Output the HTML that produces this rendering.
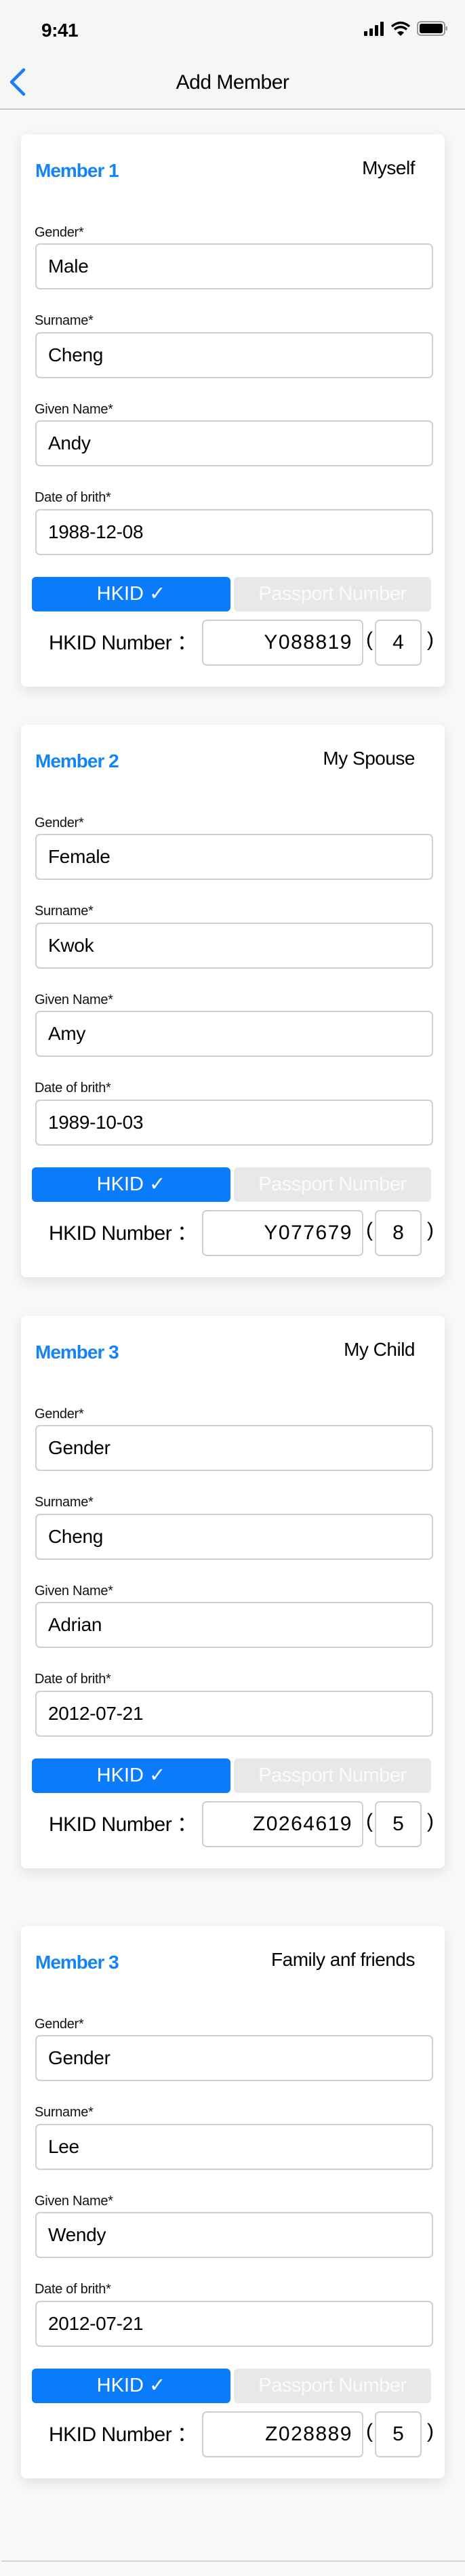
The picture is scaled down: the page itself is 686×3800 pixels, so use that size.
<!DOCTYPE html>
<html><head><meta charset="utf-8"><style>
*{margin:0;padding:0;box-sizing:border-box}
body{width:686px;height:3800px;background:#f8f8f8;font-family:"Liberation Sans",Arial,sans-serif;position:relative;overflow:hidden;color:#000}
.abs{position:absolute}
.card{position:absolute;left:31px;width:625px;height:815px;background:#fff;border-radius:8px;box-shadow:0 6px 18px rgba(0,0,0,0.10)}
.mem{position:absolute;left:21px;top:36px;font-size:28px;font-weight:bold;color:#1484f5;letter-spacing:-1px;line-height:36px}
.rel{position:absolute;right:44px;top:32px;font-size:28px;line-height:36px;letter-spacing:-0.5px}
.lbl{position:absolute;left:20px;font-size:20px;line-height:24px;color:#111;letter-spacing:-0.3px}
.inp{position:absolute;left:21px;width:587px;height:68px;border:2px solid #cfcfcf;border-radius:7px;font-size:28px;line-height:64px;padding-left:17px;letter-spacing:-0.3px}
.tg1{position:absolute;left:16px;top:653px;width:293px;height:51px;background:#0a7cfa;border-radius:6px;color:#fff;font-size:29px;text-align:center;line-height:51px}
.tg2{position:absolute;left:314px;top:653px;width:291px;height:51px;background:#e8e8e8;border-radius:6px;color:#fafafa;font-size:29px;text-align:center;line-height:51px;letter-spacing:-0.5px}
.hk{position:absolute;left:41px;top:731px;font-size:30px;line-height:40px;letter-spacing:-0.5px}
.nb{position:absolute;left:267px;top:716px;width:238px;height:68px;border:2px solid #cfcfcf;border-radius:7px;font-size:30px;line-height:64px;text-align:right;padding-right:14px;letter-spacing:1.5px}
.cb{position:absolute;left:522px;top:716px;width:69px;height:68px;border:2px solid #cfcfcf;border-radius:7px;font-size:30px;line-height:64px;text-align:center}
.p1{position:absolute;left:509px;top:729px;font-size:30px}
.p2{position:absolute;left:599px;top:729px;font-size:30px}
</style></head><body>
<div class="abs" style="left:0;top:0;width:686px;height:161px;background:#f6f6f6"></div>
<div class="abs" style="left:61px;top:29px;font-size:28px;font-weight:bold;letter-spacing:-0.5px">9:41</div>
<svg class="abs" style="left:536px;top:30px" width="125" height="26" viewBox="0 0 125 26">
<rect x="1" y="16" width="5" height="7" rx="1"/><rect x="9" y="12" width="5" height="11" rx="1"/><rect x="17" y="7" width="5" height="16" rx="1"/><rect x="25" y="2" width="5" height="21" rx="1"/>
<path d="M42 9 Q55 -2 68 9" stroke="#000" stroke-width="3.4" fill="none"/><path d="M46 13.5 Q55 6 64 13.5" stroke="#000" stroke-width="3.4" fill="none"/><path d="M50 18 Q55 14 60 18 L55 23Z" fill="#000"/>
<rect x="80" y="2" width="40" height="20" rx="5" fill="none" stroke="#999" stroke-width="2"/><rect x="83" y="5" width="34" height="14" rx="3"/><rect x="121.5" y="9" width="2.5" height="6" rx="1" fill="#999"/>
</svg>
<svg class="abs" style="left:12px;top:100px" width="28" height="42" viewBox="0 0 28 42"><path d="M23 3 L5 21 L23 39" stroke="#1a7cf5" stroke-width="4.5" fill="none" stroke-linecap="round" stroke-linejoin="round"/></svg>
<div class="abs" style="left:0;width:686px;top:103px;text-align:center;font-size:30px;letter-spacing:-0.5px;line-height:38px">Add Member</div>
<div class="abs" style="left:0;top:160px;width:686px;height:2px;background:#c8c8c8"></div>

<div class="card" style="top:198px">
<div class="mem">Member 1</div><div class="rel">Myself</div>
<div class="lbl" style="top:133px">Gender*</div><div class="inp" style="top:161px">Male</div>
<div class="lbl" style="top:263px">Surname*</div><div class="inp" style="top:292px">Cheng</div>
<div class="lbl" style="top:394px">Given Name*</div><div class="inp" style="top:422px">Andy</div>
<div class="lbl" style="top:524px">Date of brith*</div><div class="inp" style="top:553px">1988-12-08</div>
<div class="tg1">HKID ✓</div><div class="tg2">Passport Number</div>
<div class="hk">HKID Number ：</div><div class="nb">Y088819</div><div class="p1">(</div><div class="cb">4</div><div class="p2">)</div>
</div>

<div class="card" style="top:1069px">
<div class="mem">Member 2</div><div class="rel">My Spouse</div>
<div class="lbl" style="top:133px">Gender*</div><div class="inp" style="top:161px">Female</div>
<div class="lbl" style="top:263px">Surname*</div><div class="inp" style="top:292px">Kwok</div>
<div class="lbl" style="top:394px">Given Name*</div><div class="inp" style="top:422px">Amy</div>
<div class="lbl" style="top:524px">Date of brith*</div><div class="inp" style="top:553px">1989-10-03</div>
<div class="tg1">HKID ✓</div><div class="tg2">Passport Number</div>
<div class="hk">HKID Number ：</div><div class="nb">Y077679</div><div class="p1">(</div><div class="cb">8</div><div class="p2">)</div>
</div>

<div class="card" style="top:1941px">
<div class="mem">Member 3</div><div class="rel">My Child</div>
<div class="lbl" style="top:133px">Gender*</div><div class="inp" style="top:161px">Gender</div>
<div class="lbl" style="top:263px">Surname*</div><div class="inp" style="top:292px">Cheng</div>
<div class="lbl" style="top:394px">Given Name*</div><div class="inp" style="top:422px">Adrian</div>
<div class="lbl" style="top:524px">Date of brith*</div><div class="inp" style="top:553px">2012-07-21</div>
<div class="tg1">HKID ✓</div><div class="tg2">Passport Number</div>
<div class="hk">HKID Number ：</div><div class="nb">Z0264619</div><div class="p1">(</div><div class="cb">5</div><div class="p2">)</div>
</div>

<div class="card" style="top:2841px">
<div class="mem">Member 3</div><div class="rel">Family anf friends</div>
<div class="lbl" style="top:133px">Gender*</div><div class="inp" style="top:161px">Gender</div>
<div class="lbl" style="top:263px">Surname*</div><div class="inp" style="top:292px">Lee</div>
<div class="lbl" style="top:394px">Given Name*</div><div class="inp" style="top:422px">Wendy</div>
<div class="lbl" style="top:524px">Date of brith*</div><div class="inp" style="top:553px">2012-07-21</div>
<div class="tg1">HKID ✓</div><div class="tg2">Passport Number</div>
<div class="hk">HKID Number ：</div><div class="nb">Z028889</div><div class="p1">(</div><div class="cb">5</div><div class="p2">)</div>
</div>

<div class="abs" style="left:2px;top:3777px;width:684px;height:2px;background:#d4d4d4"></div>
</body></html>
